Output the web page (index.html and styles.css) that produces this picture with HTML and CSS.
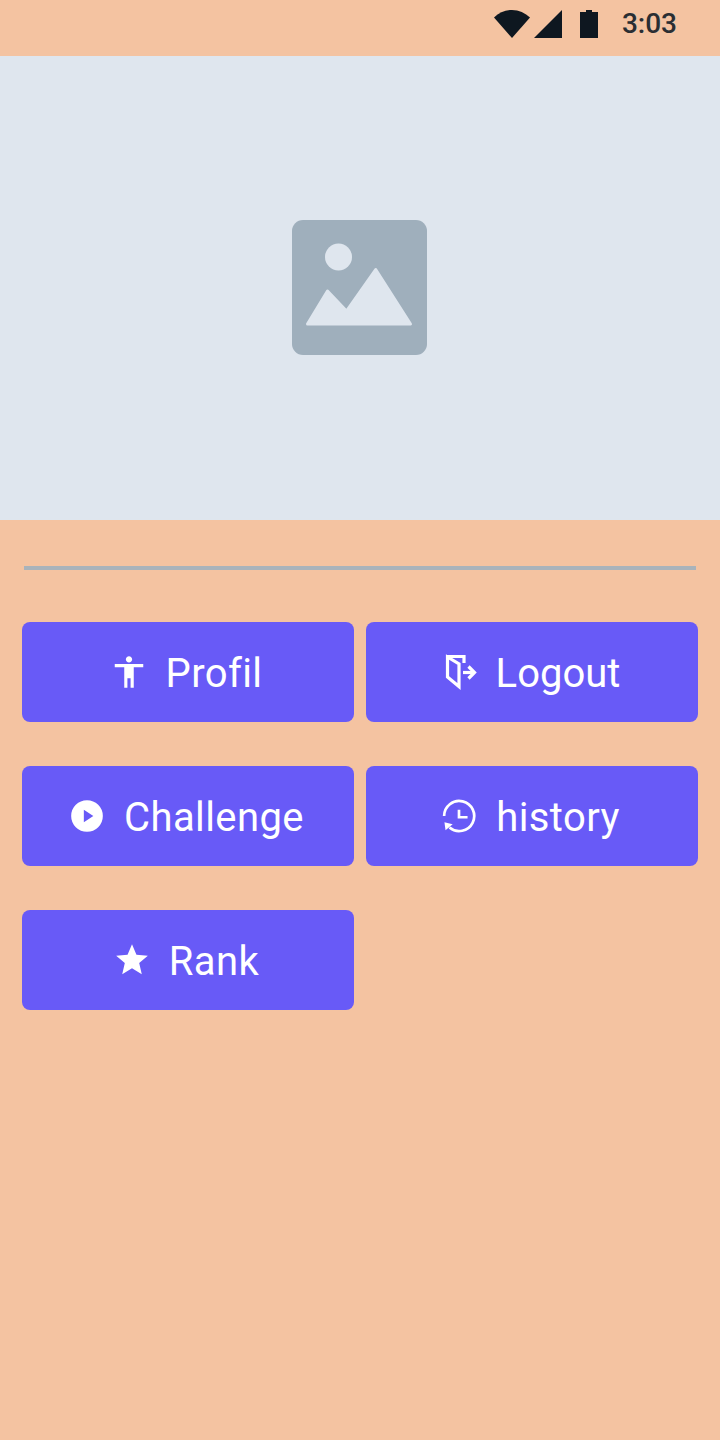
FILE: index.html
```html
<!DOCTYPE html>
<html lang="en">
<head>
    <meta charset="UTF-8">
    <meta name="viewport" content="width=device-width, initial-scale=1.0">
    <title>Menu</title>
    <link rel="stylesheet" href="styles.css">
</head>
<body>
    <div class="status-bar">
        <svg class="status-wifi" width="36" height="28" viewBox="0 0 36 28"><path d="M0 7.500C5 3 11 0 18 0s13 3 18 7.500L18 28z"/></svg>
        <svg class="status-signal" width="28" height="28" viewBox="0 0 28 28"><path d="M28 0v28H0z"/></svg>
        <svg class="status-battery" width="18" height="28" viewBox="0 0 18 28"><path d="M6 0h6v2h6v26H0V2h6z"/></svg>
        <span class="status-time">3:03</span>
    </div>

    <div class="hero">
        <svg class="hero-icon" width="135" height="135" viewBox="0 0 135 135">
            <rect width="135" height="135" rx="11" fill="#9fafbc"/>
            <circle cx="46.500" cy="37" r="13.500" fill="#dfe6ee"/>
            <path d="M15.500 104 35.500 71 54.500 91 83.700 49.500 118.500 104z" fill="#dfe6ee" stroke="#dfe6ee" stroke-width="3" stroke-linejoin="round"/>
        </svg>
    </div>

    <hr class="divider">

    <div class="menu">
        <button class="menu-btn">
            <svg class="icon" viewBox="0 0 24 24"><path d="M12 2c1.100 0 2 .9 2 2s-.9 2-2 2-2-.9-2-2 .9-2 2-2zm9 7h-6v13h-2v-6h-2v6H9V9H3V7h18v2z"/></svg>
            <span>Profil</span>
        </button>
        <button class="menu-btn menu-btn-tight">
            <svg class="icon icon-line" viewBox="0 0 38 38"><path d="M7.500 4V24L19 33.500V11z"/><path d="M6.500 3.500H24V10"/><path d="M23 19.500H34"/><path d="M28.500 13.500 34.500 19.500 28.500 25.500"/></svg>
            <span>Logout</span>
        </button>
        <button class="menu-btn">
            <svg class="icon" viewBox="0 0 24 24"><path fill-rule="evenodd" d="M12 2a10 10 0 1 0 0 20 10 10 0 0 0 0-20zM10 8l6 4-6 4z"/></svg>
            <span>Challenge</span>
        </button>
        <button class="menu-btn">
            <svg class="icon" viewBox="0 0 24 24">
                <path class="clock" d="M2.600 12A9.500 9.500 0 1 1 6 19.300"/>
                <path class="clock" d="M12 8v4.800h5.400"/>
                <path d="M2.800 16 8 17.200 3.500 21z"/>
            </svg>
            <span>history</span>
        </button>
        <button class="menu-btn">
            <svg class="icon" viewBox="0 0 24 24"><path d="M12 17.270 18.180 21l-1.640-7.030L22 9.240l-7.190-.61L12 2 9.190 8.630 2 9.240l5.460 4.730L5.820 21z"/></svg>
            <span>Rank</span>
        </button>
    </div>
</body>
</html>
```

FILE: styles.css
```css
body {
    margin: 0;
    min-height: 1440px;
    background-color: #f4c3a1;
    font-family: Roboto, "Liberation Sans", sans-serif;
}

.status-bar {
    height: 56px;
    display: flex;
    align-items: flex-start;
    justify-content: flex-end;
    padding: 10px 43px 0 0;
    box-sizing: border-box;
}
.status-bar svg {
    fill: #0e1720;
    flex: none;
}
.status-signal {
    margin-left: 4px;
}
.status-battery {
    margin-left: 18px;
}
.status-time {
    margin-left: 24px;
    color: #2a2e33;
    font-size: 28px;
    line-height: 28px;
    font-weight: 500;
}

.hero {
    height: 464px;
    display: flex;
    align-items: center;
    justify-content: center;
    background-color: #dfe6ee;
}
.hero-icon {
    margin: 0 1px 1px 0;
}

.divider {
    height: 4px;
    margin: 46px 24px 52px;
    border: none;
    background-color: #a9b3bb;
}

.menu {
    display: grid;
    grid-template-columns: 1fr 1fr;
    gap: 44px 12px;
    padding: 0 22px;
}
.menu-btn {
    height: 100px;
    display: flex;
    align-items: center;
    justify-content: center;
    gap: 18px;
    padding: 2px 4px 0 0;
    border: none;
    border-radius: 8px;
    background-color: #685af7;
    color: #ffffff;
    font-family: inherit;
    font-size: 40px;
    letter-spacing: 0.4px;
}
.menu-btn-tight {
    letter-spacing: 0;
}

.icon {
    width: 38px;
    height: 38px;
    margin-top: -2px;
    fill: #ffffff;
    flex: none;
}
.icon-line path, .clock {
    fill: none;
    stroke: #ffffff;
}
.icon-line path {
    stroke-width: 3.200;
}
.clock {
    stroke-width: 1.700;
}
```
